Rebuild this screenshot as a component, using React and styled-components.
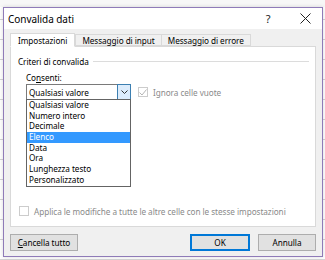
import React from "react";
import styled, { createGlobalStyle } from "styled-components";

const GlobalStyle = createGlobalStyle`
  html, body {
    margin: 0;
    padding: 0;
    background: #ececec;
  }
  body {
    font-family: "Noto Sans", "Open Sans", sans-serif;
    font-size: 8.2px;
    letter-spacing: -0.05px;
    color: #000;
  }
`;

const Screen = styled.div`
  width: 325px;
  height: 260px;
  overflow: hidden;
  padding: 7px 2px 0 3px;
  box-sizing: border-box;
  background:
    linear-gradient(#f7f7f7 0 7px, transparent 7px),
    repeating-linear-gradient(#ffffff 0 19px, #d4d4d4 19px 20px);
`;

const Dialog = styled.div`
  width: 320px;
  height: 250px;
  box-sizing: border-box;
  border: 1px solid #8f7bb8;
  background: #f0f0f0;
  display: flex;
  flex-direction: column;
  box-shadow: 0 0 4px rgba(0, 0, 0, 0.15);
`;

const TitleBar = styled.div`
  height: 22px;
  background: #ffffff;
  display: flex;
  align-items: center;
  padding: 0 0 0 4px;
`;

const Title = styled.div`
  flex: 1;
  font-size: 10px;
  color: #000;
`;

const TitleButton = styled.div`
  width: ${(p) => p.w}px;
  display: flex;
  align-items: center;
  justify-content: center;
  font-size: 11px;
  color: #222;
`;

const Body = styled.div`
  flex: 1;
  display: flex;
  flex-direction: column;
  padding: 3px 6px 0 6px;
`;

const Tabs = styled.div`
  display: flex;
  align-items: flex-end;
  height: 14px;
  position: relative;
  z-index: 1;
`;

const Tab = styled.div`
  height: ${(p) => (p.active ? 14 : 12)}px;
  box-sizing: border-box;
  padding: 0 ${(p) => (p.active ? 7 : 6)}px;
  margin-right: ${(p) => (p.active ? 0 : -1)}px;
  display: flex;
  align-items: center;
  border: 1px solid #d9d9d9;
  border-bottom: ${(p) => (p.active ? "1px solid #ffffff" : "1px solid #d9d9d9")};
  background: ${(p) => (p.active ? "#ffffff" : "#f0f0f0")};
  margin-bottom: ${(p) => (p.active ? -1 : 0)}px;
`;

const Panel = styled.div`
  height: 181px;
  box-sizing: border-box;
  background: #ffffff;
  border: 1px solid #d9d9d9;
  padding: 7px 6px 0 7px;
  display: flex;
  flex-direction: column;
`;

const GroupHeader = styled.div`
  display: flex;
  align-items: center;
  gap: 4px;
  height: 14px;
`;

const Rule = styled.div`
  flex: 1;
  height: 1px;
  background: #dcdcdc;
`;

const Row = styled.div`
  display: flex;
  align-items: flex-end;
  gap: 7px;
  padding-left: 8px;
  margin-top: 2px;
`;

const Field = styled.div`
  display: flex;
  flex-direction: column;
`;

const Label = styled.div`
  height: 14px;
  display: flex;
  align-items: center;
`;

const Combo = styled.div`
  position: relative;
  width: 105px;
  height: 16px;
  box-sizing: border-box;
  border: 1px solid #7a7a7a;
  background: #ffffff;
  display: flex;
  align-items: center;
`;

const ComboValue = styled.div`
  flex: 1;
  padding-left: 2px;
`;

const ComboButton = styled.div`
  width: 14px;
  height: 16px;
  margin: -1px -1px -1px 0;
  box-sizing: border-box;
  border: 1px solid #3c7fb1;
  background: #dcecfc;
  display: flex;
  align-items: center;
  justify-content: center;
`;

const List = styled.div`
  position: absolute;
  left: -1px;
  top: 14px;
  width: 105px;
  box-sizing: border-box;
  border: 1px solid #646464;
  background: #ffffff;
  z-index: 2;
`;

const Item = styled.div`
  height: 10.7px;
  line-height: 10.7px;
  padding-left: 2px;
  background: ${(p) => (p.selected ? "#3399ff" : "transparent")};
  color: ${(p) => (p.selected ? "#ffffff" : "#000")};
`;

const Check = styled.div`
  display: flex;
  align-items: center;
  gap: 5px;
  color: ${(p) => (p.disabled ? "#8a8a8a" : "#000")};
  height: 16px;
`;

const Box = styled.div`
  width: 10px;
  height: 10px;
  box-sizing: border-box;
  border: 1px solid #cccccc;
  background: #ffffff;
  display: flex;
  align-items: center;
  justify-content: center;
`;

const Spacer = styled.div`
  flex: 1;
`;

const ApplyRow = styled(Check)`
  margin-bottom: 7px;
  padding-left: 1px;
`;

const Footer = styled.div`
  display: flex;
  align-items: center;
  height: 28px;
  padding-top: 1px;
`;

const Button = styled.div`
  width: ${(p) => p.w}px;
  height: 17px;
  box-sizing: border-box;
  border: ${(p) => (p.primary ? "2px solid #0078d7" : "1px solid #adadad")};
  background: #e1e1e1;
  display: flex;
  align-items: center;
  justify-content: center;
  margin-left: ${(p) => p.ml || 0}px;
`;

const items = [
  "Qualsiasi valore",
  "Numero intero",
  "Decimale",
  "Elenco",
  "Data",
  "Ora",
  "Lunghezza testo",
  "Personalizzato",
];

export default function App() {
  return (
    <>
      <GlobalStyle />
      <Screen>
        <Dialog>
          <TitleBar>
            <Title>Convalida dati</Title>
            <TitleButton w={40}>?</TitleButton>
            <TitleButton w={34}>
              <svg width="11" height="11" viewBox="0 0 11 11">
                <path d="M0.5 0.5 L10.5 10.5 M10.5 0.5 L0.5 10.5" stroke="#222" strokeWidth="1" />
              </svg>
            </TitleButton>
          </TitleBar>
          <Body>
            <Tabs>
              <Tab active>Impostazioni</Tab>
              <Tab>Messaggio di input</Tab>
              <Tab>Messaggio di errore</Tab>
            </Tabs>
            <Panel>
              <GroupHeader>
                <span>Criteri di convalida</span>
                <Rule />
              </GroupHeader>
              <Row>
                <Field>
                  <Label>
                    <span>
                      Co<u>n</u>senti:
                    </span>
                  </Label>
                  <Combo>
                    <ComboValue>Qualsiasi valore</ComboValue>
                    <ComboButton>
                      <svg width="7" height="4" viewBox="0 0 7 4">
                        <path d="M0.5 0.5 L3.5 3.5 L6.5 0.5" fill="none" stroke="#333" strokeWidth="1" />
                      </svg>
                    </ComboButton>
                    <List>
                      {items.map((it) => (
                        <Item key={it} selected={it === "Elenco"}>
                          {it}
                        </Item>
                      ))}
                    </List>
                  </Combo>
                </Field>
                <Check disabled>
                  <Box>
                    <svg width="8" height="7" viewBox="0 0 8 7">
                      <path d="M0.5 3.5 L3 6 L7.5 0.5" fill="none" stroke="#b5b5b5" strokeWidth="1" />
                    </svg>
                  </Box>
                  Ignora celle vuote
                </Check>
              </Row>
              <Spacer />
              <ApplyRow disabled>
                <Box />
                Applica le modifiche a tutte le altre celle con le stesse impostazioni
              </ApplyRow>
            </Panel>
            <Footer>
              <Button w={68}>
                <span>
                  <u>C</u>ancella tutto
                </span>
              </Button>
              <Button w={60} ml={112} primary>
                OK
              </Button>
              <Button w={58} ml={8}>
                Annulla
              </Button>
            </Footer>
          </Body>
        </Dialog>
      </Screen>
    </>
  );
}
